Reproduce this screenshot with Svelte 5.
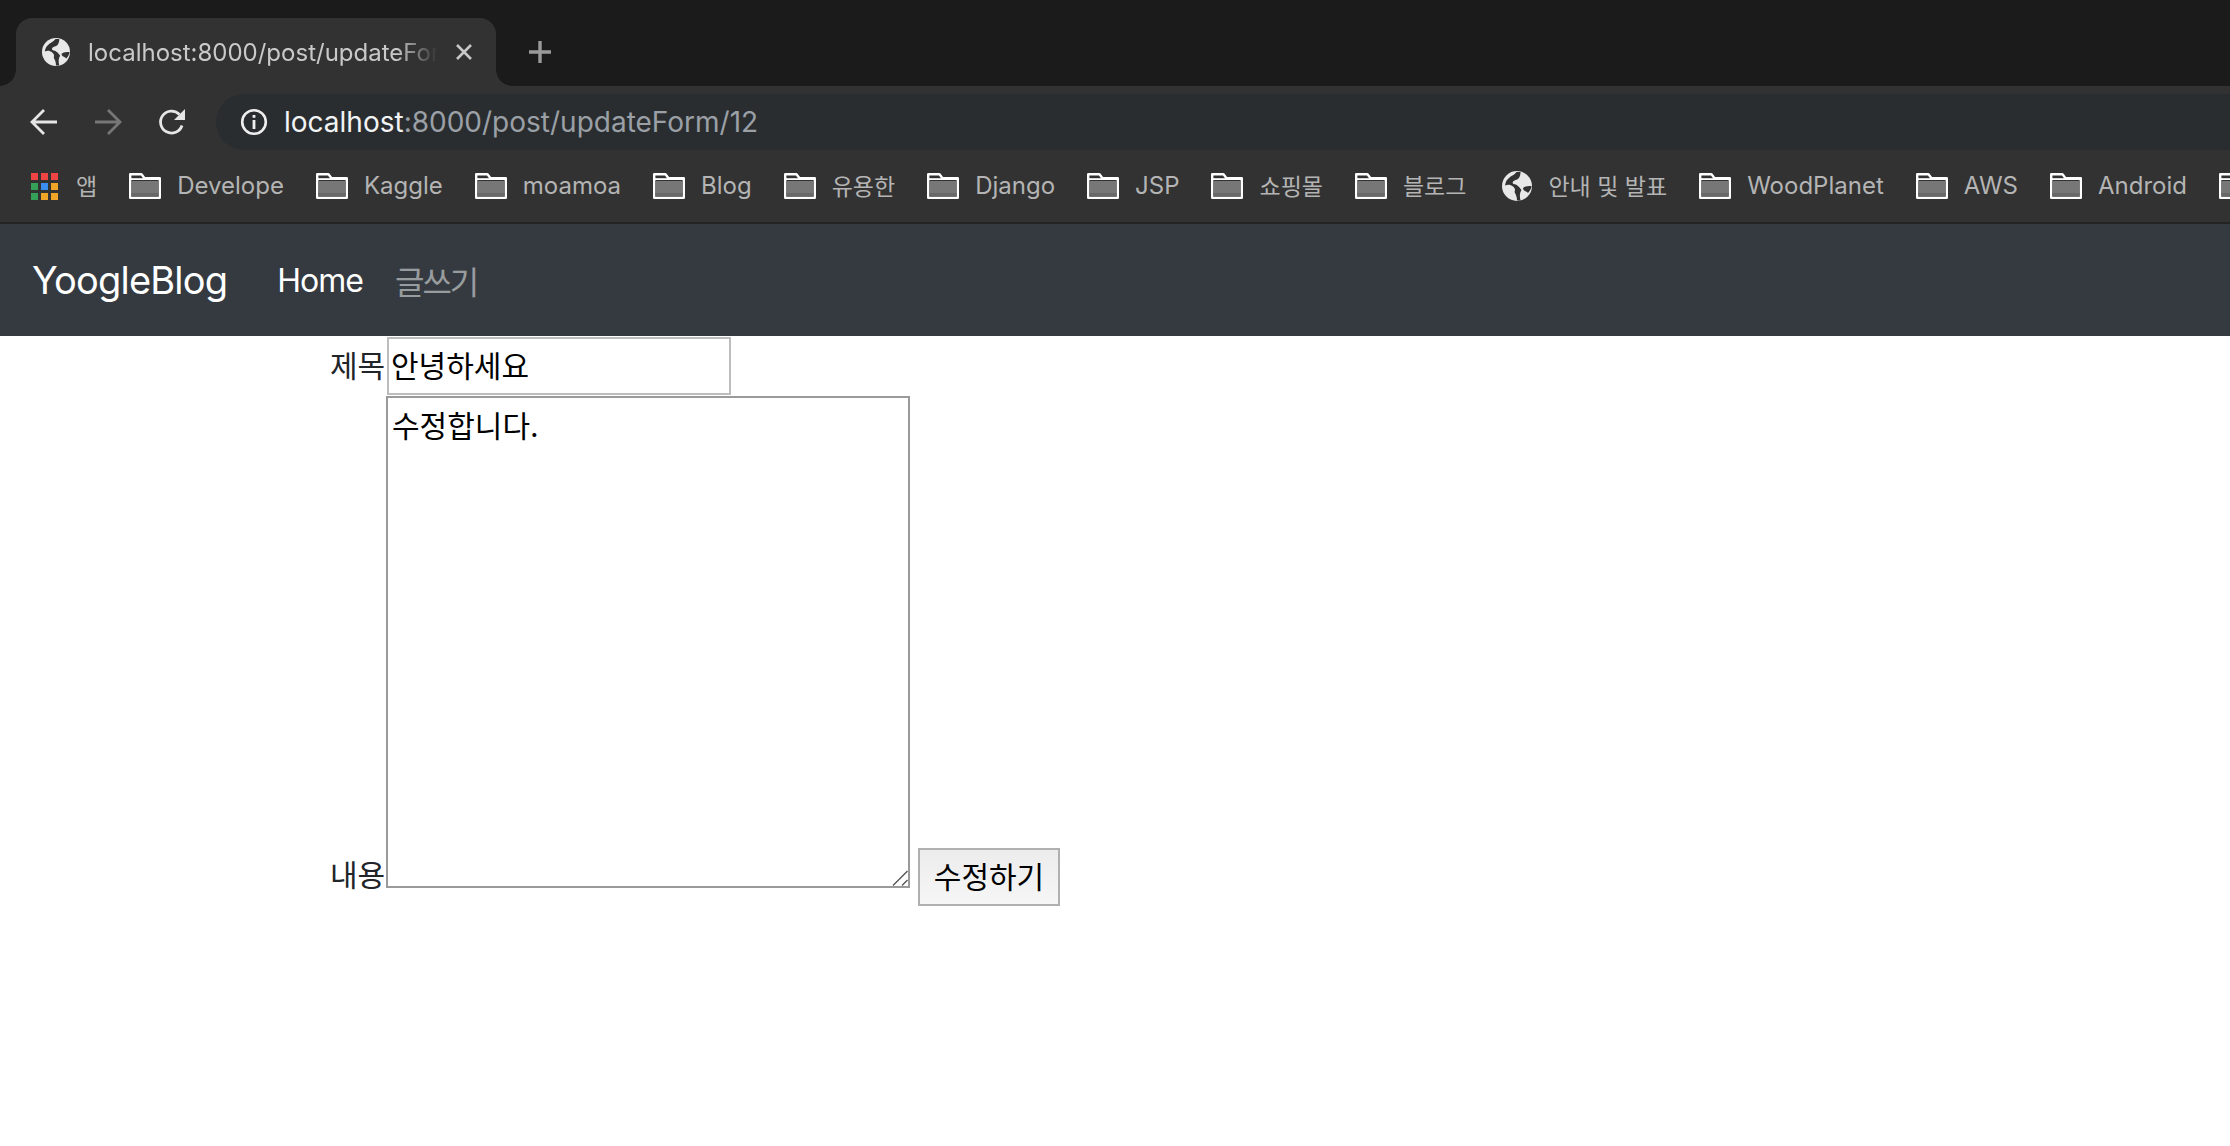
<script>
	const bookmarks = [
		{ label: 'Develope' },
		{ label: 'Kaggle' },
		{ label: 'moamoa' },
		{ label: 'Blog' },
		{ label: '유용한', ko: true },
		{ label: 'Django' },
		{ label: 'JSP' },
		{ label: '쇼핑몰', ko: true },
		{ label: '블로그', ko: true },
		{ label: '안내 및 발표', ko: true, globe: true },
		{ label: 'WoodPlanet' },
		{ label: 'AWS' },
		{ label: 'Android' },
		{ label: '' }
	];
	const appColors = ['#ef4444', '#ef4444', '#ef4444', '#34a058', '#3b8ef0', '#f0a428', '#34a058', '#f0a428', '#f0a428'];
</script>

{#snippet globe(size)}
	<svg class="globe" width={size} height={size} viewBox="0 0 30 30">
		<circle cx="15" cy="15" r="15" fill="#e8e8e8" />
		<path d="M3 14.500C6 13 8.500 13.500 11 15.500C13 17 13.500 19 12.500 21C14 24 15 26 15 29.500L18.500 29.500C17.500 25 17.500 22 19.500 19C17.500 16 14.500 13 11.500 13C10 12 10.500 10 13.500 9C16.500 8.500 18.500 6 18.500 1L14.500 1C12.500 4 8.500 5 6.500 7.500C4 9.500 3.500 12 3 14.500z" fill="#323232" />
		<path d="M29.500 15C26 15 23 15 21 17C21 20 24 20 26 22C28 20 29.500 17 29.500 15z" fill="#323232" />
	</svg>
{/snippet}

<div class="browser">
	<div class="tabstrip">
		<div class="tab">
			{@render globe(28)}
			<span class="tab-title">localhost:8000/post/updateForm/12</span>
			<svg class="tab-close" width="18" height="18" viewBox="0 0 18 18">
				<path d="M2 2l14 14M16 2L2 16" stroke="#c8c8c8" stroke-width="2.600" fill="none" />
			</svg>
		</div>
		<svg class="new-tab" width="24" height="24" viewBox="0 0 24 24">
			<path d="M12 1v22M1 12h22" stroke="#9a9a9a" stroke-width="3.400" fill="none" />
		</svg>
	</div>

	<div class="toolbar">
		<svg class="nav-icon" width="28" height="28" viewBox="0 0 28 28">
			<path d="M27 14H2M14 2L2 14l12 12" stroke="#e6e6e6" stroke-width="2.800" fill="none" />
		</svg>
		<svg class="nav-icon" width="28" height="28" viewBox="0 0 28 28">
			<path d="M1 14h25M14 2l12 12l-12 12" stroke="#777" stroke-width="2.800" fill="none" />
		</svg>
		<svg class="nav-icon" width="28" height="28" viewBox="0 0 28 28">
			<path d="M24 17.500A11 11 0 1 1 21.500 6.500" stroke="#e6e6e6" stroke-width="2.800" fill="none" />
			<path d="M27 1v11H16z" fill="#e6e6e6" />
		</svg>
		<div class="omnibox">
			<svg width="28" height="28" viewBox="0 0 28 28">
				<circle cx="14" cy="14" r="11.800" stroke="#eee" stroke-width="2.600" fill="none" />
				<rect x="12.600" y="12" width="2.800" height="9" fill="#eee" />
				<rect x="12.600" y="7" width="2.800" height="2.800" fill="#eee" />
			</svg>
			<span class="url"><span class="host">localhost</span>:8000/post/updateForm/12</span>
		</div>
	</div>

	<div class="bookmarks">
		<div class="bookmark apps">
			<div class="app-grid">
				{#each appColors as color}
					<i style="background: {color}"></i>
				{/each}
			</div>
			<span class="ko">앱</span>
		</div>
		{#each bookmarks as item}
			<div class="bookmark" class:site={item.globe}>
				{#if item.globe}
					{@render globe(30)}
				{:else}
					<svg class="folder" width="32" height="26" viewBox="0 0 32 26">
						<path d="M1.200 24.800V1.200h11.300l3 4h15.300v19.600z" fill="#323232" stroke="#fff" stroke-width="2.400" stroke-linejoin="round" />
						<rect x="2.400" y="8" width="27.200" height="15.600" fill="#777" />
						<rect x="2.400" y="20" width="27.200" height="3.600" fill="#686868" />
						<rect x="1" y="5.200" width="30" height="1.800" fill="#fff" />
					</svg>
				{/if}
				{#if item.label}
					<span class:ko={item.ko}>{item.label}</span>
				{/if}
			</div>
		{/each}
	</div>
</div>

<nav class="navbar">
	<span class="brand">YoogleBlog</span>
	<span class="nav-link active">Home</span>
	<span class="nav-link hangul">글쓰기</span>
</nav>

<form class="post-form">
	<div class="row title-row">
		<label for="title">제목</label>
		<input id="title" type="text" value="안녕하세요" />
	</div>
	<div class="row content-row">
		<label for="content">내용</label>
		<div class="area-wrap">
			<textarea id="content">수정합니다.</textarea>
			<svg class="grip" width="16" height="16" viewBox="0 0 16 16">
				<path d="M1 15.500L15.500 1M10 15.500L15.500 10" stroke="#555" stroke-width="1.400" fill="none" />
			</svg>
		</div>
		<button type="button">수정하기</button>
	</div>
</form>

<style>
	:global(body) {
		margin: 0;
		background: #fff;
		font-family: Inter, "Noto Sans CJK KR", sans-serif;
	}
	.browser {
		background: #323232;
	}
	.tabstrip {
		height: 86px;
		background: #1b1b1b;
		display: flex;
		align-items: flex-end;
	}
	.tab {
		position: relative;
		box-sizing: border-box;
		width: 480px;
		height: 68px;
		margin-left: 16px;
		padding: 0 24px 0 26px;
		background: #323232;
		border-radius: 16px 16px 0 0;
		display: flex;
		align-items: center;
		gap: 18px;
	}
	.tab::before,
	.tab::after {
		content: '';
		position: absolute;
		bottom: 0;
		width: 16px;
		height: 16px;
	}
	.tab::before {
		left: -16px;
		background: radial-gradient(circle at 0 0, #1b1b1b 15.500px, #323232 16px);
	}
	.tab::after {
		right: -16px;
		background: radial-gradient(circle at 100% 0, #1b1b1b 15.500px, #323232 16px);
	}
	.globe {
		flex: none;
	}
	.tab-title {
		width: 350px;
		flex: none;
		overflow: hidden;
		white-space: nowrap;
		font-size: 24px;
		color: #c9c9c9;
		-webkit-mask-image: linear-gradient(to right, #000 88%, transparent 100%);
		mask-image: linear-gradient(to right, #000 88%, transparent 100%);
	}
	.tab-close {
		flex: none;
		margin-left: -1px;
	}
	.new-tab {
		margin: 0 0 22px 32px;
		flex: none;
	}
	.toolbar {
		height: 56px;
		padding: 8px 0 0 30px;
		display: flex;
		align-items: center;
		gap: 36px;
	}
	.nav-icon {
		flex: none;
	}
	.omnibox {
		flex: 1;
		height: 56px;
		margin-left: -6px;
		padding-left: 24px;
		background: #2a2d30;
		border-radius: 28px 0 0 28px;
		display: flex;
		align-items: center;
		gap: 16px;
		font-size: 28px;
		color: #9aa0a6;
	}
	.host {
		color: #f1f3f4;
	}
	.bookmarks {
		height: 72px;
		padding-left: 31px;
		border-bottom: 2px solid #242424;
		display: flex;
		align-items: center;
		gap: 32px;
		overflow: hidden;
		font-size: 24px;
		color: #b4b4b4;
		white-space: nowrap;
	}
	.bookmark {
		display: flex;
		align-items: center;
		gap: 16px;
		flex: none;
	}
	.bookmark span {
		margin-top: -2px;
	}
	.site {
		margin-left: 4px;
	}
	.ko {
		font-size: 23px;
	}
	.apps {
		gap: 18px;
	}
	.app-grid {
		display: grid;
		grid-template-columns: repeat(3, 7px);
		grid-auto-rows: 7px;
		gap: 3px;
	}
	.folder {
		flex: none;
	}
	.navbar {
		height: 112px;
		box-sizing: border-box;
		padding-left: 32px;
		background: #343a40;
		display: flex;
		align-items: center;
		font-size: 32px;
		letter-spacing: -1px;
		color: rgba(255, 255, 255, 0.5);
	}
	.brand {
		font-size: 38px;
		letter-spacing: -0.8px;
		color: #fff;
		margin-right: 50px;
	}
	.nav-link {
		margin-right: 32px;
	}
	.hangul {
		letter-spacing: -2px;
	}
	.active {
		color: #fff;
	}
	.post-form {
		padding: 1px 0 0 330px;
		font-size: 30px;
		color: #212529;
	}
	.row {
		display: flex;
	}
	.title-row {
		align-items: center;
	}
	.content-row {
		align-items: flex-end;
		margin-top: 1px;
	}
	label {
		width: 56px;
		line-height: 44px;
		flex: none;
	}
	.content-row label {
		margin-bottom: 9px;
	}
	.area-wrap {
		position: relative;
		margin-bottom: 18px;
	}
	.grip {
		position: absolute;
		right: 2px;
		bottom: 2px;
		pointer-events: none;
	}
	input,
	textarea,
	button {
		font: inherit;
		color: #000;
		box-sizing: border-box;
		margin: 0;
	}
	input {
		width: 344px;
		height: 58px;
		margin-left: 1px;
		padding: 0 2px 4px;
		border: 2px solid #bdbdbd;
		outline: none;
	}
	textarea {
		width: 524px;
		height: 492px;
		padding: 4px 4px;
		border: 2px solid #9a9a9a;
		background: #fff;
		display: block;
		resize: none;
	}
	button {
		width: 142px;
		height: 58px;
		margin-left: 8px;
		padding: 0 0 5px;
		border: 2px solid #b0b0b0;
		background: linear-gradient(#ececec, #f6f6f6);
	}
</style>
